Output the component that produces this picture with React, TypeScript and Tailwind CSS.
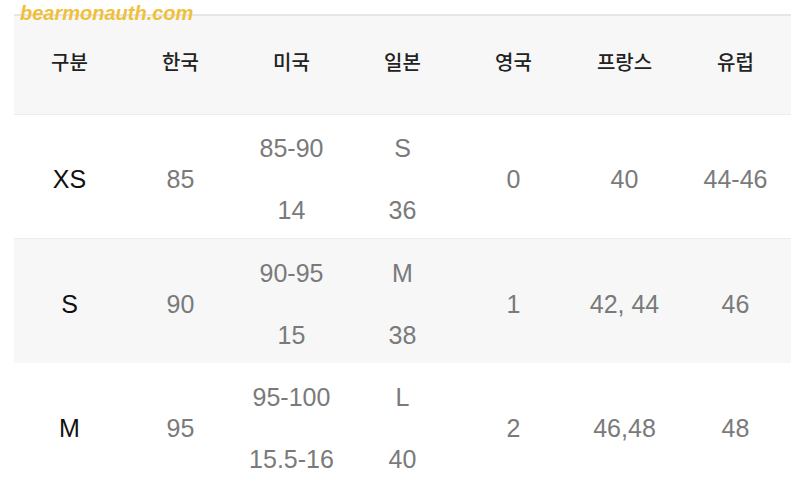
import React from 'react';

const headers = ['구분', '한국', '미국', '일본', '영국', '프랑스', '유럽'];

type Row = {
  size: string;
  kr: string;
  us: [string, string];
  jp: [string, string];
  uk: string;
  fr: string;
  eu: string;
};

const rows: Row[] = [
  { size: 'XS', kr: '85', us: ['85-90', '14'], jp: ['S', '36'], uk: '0', fr: '40', eu: '44-46' },
  { size: 'S', kr: '90', us: ['90-95', '15'], jp: ['M', '38'], uk: '1', fr: '42, 44', eu: '46' },
  { size: 'M', kr: '95', us: ['95-100', '15.5-16'], jp: ['L', '40'], uk: '2', fr: '46,48', eu: '48' },
];

const Cell = ({ children, dark }: { children: React.ReactNode; dark?: boolean }) => (
  <div className={`flex items-center justify-center ${dark ? 'text-[#111]' : 'text-[#7a7a7a]'}`}>
    {children}
  </div>
);

const Stack = ({ top, bottom }: { top: string; bottom: string }) => (
  <div className="flex flex-col items-center justify-center gap-[32px] text-[#7a7a7a]">
    <span>{top}</span>
    <span>{bottom}</span>
  </div>
);

export default function App() {
  return (
    <div
      className="relative w-[800px] h-[486px] overflow-hidden bg-white pt-[14px] pl-[14px]"
      style={{ fontFamily: '"Noto Sans", "Noto Sans CJK KR", sans-serif' }}
    >
      <div className="absolute left-[20px] top-[-1px] text-[20px] font-bold italic text-[#f0c03a] leading-[28px] z-10"
        style={{ fontFamily: '"Liberation Sans", Arial, sans-serif' }}>
        bearmonauth.com
      </div>
      <div className="w-[777px] border-t-2 border-[#e6e6e6]">
        <div className="grid grid-cols-[repeat(7,111px)] h-[99px] bg-[#f7f7f7] border-b border-[#ececec] text-[20px] font-medium text-[#222]">
          {headers.map(h => (
            <div key={h} className="flex items-center justify-center pb-[4px]">{h}</div>
          ))}
        </div>
        {rows.map((r, i) => (
          <div
            key={r.size}
            className={`grid grid-cols-[repeat(7,111px)] h-[124px] pt-[5px] text-[25px] leading-[30px] ${
              i === 1 ? 'bg-[#f7f7f7]' : 'bg-white'
            } ${i === 0 ? 'border-b border-[#ececec]' : ''}`}
            style={{ fontFamily: '"Liberation Sans", Arial, sans-serif' }}
          >
            <Cell dark>{r.size}</Cell>
            <Cell>{r.kr}</Cell>
            <Stack top={r.us[0]} bottom={r.us[1]} />
            <Stack top={r.jp[0]} bottom={r.jp[1]} />
            <Cell>{r.uk}</Cell>
            <Cell>{r.fr}</Cell>
            <Cell>{r.eu}</Cell>
          </div>
        ))}
      </div>
    </div>
  );
}
